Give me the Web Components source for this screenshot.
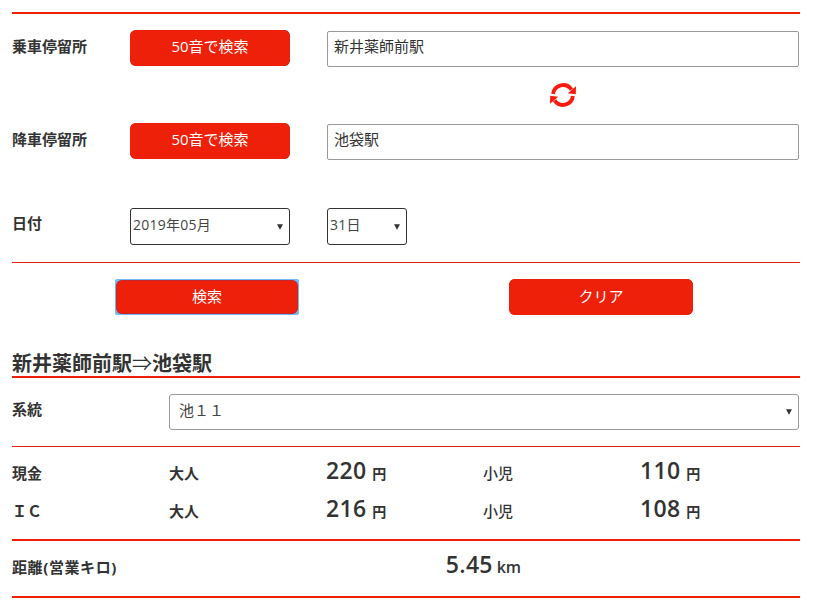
<!DOCTYPE html>
<html lang="ja">
<head>
<meta charset="utf-8">
<title>運賃検索</title>
<style>
  html, body { margin: 0; background: #fff; }
  body {
    font-family: "Open Sans", "Noto Sans CJK JP", sans-serif;
    color: #333;
    font-size: 15px;
  }
</style>
</head>
<body>
<fare-page>
  <red-rule size="2" top="12"></red-rule>

  <form-row label="乗車停留所" top="16">
    <red-button width="160">50音で検索</red-button>
    <text-box slot="field" value="新井薬師前駅"></text-box>
  </form-row>
  <swap-icon></swap-icon>
  <form-row label="降車停留所">
    <red-button width="160">50音で検索</red-button>
    <text-box slot="field" value="池袋駅"></text-box>
  </form-row>
  <form-row label="日付" top="48" tight>
    <select-box width="160" value="2019年05月"></select-box>
    <select-box slot="field" width="80" value="31日"></select-box>
  </form-row>

  <red-rule size="1" top="17"></red-rule>
  <action-bar>
    <red-button width="184" lift="3" focused>検索</red-button>
    <red-button width="184" lift="3">クリア</red-button>
  </action-bar>

  <route-title>新井薬師前駅<span style="font-weight:400">⇒</span>池袋駅</route-title>

  <system-row label="系統" value="池１１"></system-row>
  <red-rule size="1" top="16"></red-rule>

  <fare-row label="現金" adult="220" child="110"></fare-row>
  <fare-row label="ＩＣ" adult="216" child="108"></fare-row>
  <red-rule size="2" top="9"></red-rule>

  <distance-row label="距離(営業キロ)" value="5.45"></distance-row>
  <red-rule size="2" top="0"></red-rule>
</fare-page>

<script>
/**
 * Attach an open shadow root holding the given markup.
 *
 * @param {HTMLElement} el - The host element.
 * @param {string} html - Styles and markup.
 */
function render (el, html) {
  el.attachShadow({ mode: 'open' }).innerHTML = html
}

customElements.define('fare-page', class extends HTMLElement {
  constructor () {
    super()
    render(this, `
      <style>
        :host { display: block; width: 788px; padding: 0 15px 12px 12px; }
      </style>
      <slot></slot>`)
  }
})

customElements.define('red-rule', class extends HTMLElement {
  connectedCallback () {
    render(this, `
      <style>
        :host {
          display: block;
          height: ${this.getAttribute('size')}px;
          margin-top: ${this.getAttribute('top')}px;
          background: #ee2009;
        }
      </style>`)
  }
})

customElements.define('form-row', class extends HTMLElement {
  connectedCallback () {
    render(this, `
      <style>
        :host {
          display: grid;
          grid-template-columns: 118px 197px 1fr;
          align-items: start;
          margin-top: ${this.getAttribute('top') || 0}px;
        }
        .label {
          font-weight: 700;
          font-size: 15px;
          line-height: ${this.hasAttribute('tight') ? 30 : 32}px;
        }
      </style>
      <div class="label">${this.getAttribute('label')}</div>
      <div><slot></slot></div>
      <div><slot name="field"></slot></div>`)
  }
})

customElements.define('red-button', class extends HTMLElement {
  connectedCallback () {
    const focused = this.hasAttribute('focused')
    render(this, `
      <style>
        :host { display: block; width: ${this.getAttribute('width')}px; }
        button {
          display: block;
          box-sizing: border-box;
          width: 100%;
          height: 36px;
          padding: ${focused ? '1px' : '0'};
          border: 0;
          border-radius: ${focused ? '2px' : '6px'};
          background: ${focused ? '#74b8f9' : '#ee2009'};
          color: #fff;
          font: 15px "Open Sans", "Noto Sans CJK JP", sans-serif;
        }
        span {
          display: flex;
          align-items: center;
          justify-content: center;
          box-sizing: border-box;
          height: 100%;
          padding-bottom: ${this.getAttribute('lift') || 5}px;
          border-radius: 6px;
          background: #ee2009;
          ${focused ? 'box-shadow: inset 0 0 0 1px rgba(100, 60, 130, .3);' : ''}
        }
      </style>
      <button type="button"><span><slot></slot></span></button>`)
  }
})

customElements.define('text-box', class extends HTMLElement {
  connectedCallback () {
    render(this, `
      <style>
        :host {
          display: block;
          box-sizing: border-box;
          width: 472px;
          height: 36px;
          margin-top: 1px;
          padding: 0 6px;
          border: 1px solid #999;
          border-radius: 2px;
          font-size: 15px;
          line-height: 29px;
          color: #333;
        }
      </style>
      ${this.getAttribute('value')}`)
  }
})

customElements.define('select-box', class extends HTMLElement {
  connectedCallback () {
    const tall = this.getAttribute('height') || 37
    render(this, `
      <style>
        :host {
          display: flex;
          align-items: center;
          justify-content: space-between;
          box-sizing: border-box;
          width: ${this.getAttribute('width')}px;
          height: ${tall}px;
          padding: 0 6px 0 ${this.getAttribute('pad') || 2}px;
          border: 1px solid ${this.getAttribute('line') || '#333'};
          border-radius: 3px;
          font-size: ${this.getAttribute('text') || 14}px;
          letter-spacing: ${this.getAttribute('text') ? 0 : 0.25}px;
          color: #444;
        }
        span { position: relative; top: -3px; }
        svg { display: block; }
      </style>
      <span>${this.getAttribute('value')}</span>
      <svg width="6" height="6" viewBox="0 0 6 6"><path d="M0 .3h6L3 5.8z" fill="#333"/></svg>`)
  }
})

customElements.define('swap-icon', class extends HTMLElement {
  constructor () {
    super()
    render(this, `
      <style>
        :host { display: flex; height: 56px; padding: 16px 0 0 538px; box-sizing: border-box; }
        svg { display: block; }
      </style>
      <svg width="26" height="24" viewBox="0 0 26 24" fill="none" stroke="#fb1a10" stroke-width="3.8">
        <path d="M3.1 11A10 10 0 0 1 21.4 6.6"/>
        <path d="M22.9 13A10 10 0 0 1 4.6 17.4"/>
        <path d="M26 3.2 25.8 11.2 17.8 10.2z" fill="#fb1a10" stroke="none"/>
        <path d="M0 20.8 .2 12.8 8.2 13.8z" fill="#fb1a10" stroke="none"/>
      </svg>`)
  }
})

customElements.define('action-bar', class extends HTMLElement {
  constructor () {
    super()
    render(this, `
      <style>
        :host { display: flex; gap: 210px; margin-top: 16px; padding-left: 103px; }
      </style>
      <slot></slot>`)
  }
})

customElements.define('route-title', class extends HTMLElement {
  constructor () {
    super()
    render(this, `
      <style>
        :host {
          display: block;
          margin-top: 30px;
          padding-top: 6px;
          border-bottom: 2px solid #ee2009;
          font-size: 20px;
          font-weight: 700;
          line-height: 25px;
          color: #333;
        }
      </style>
      <slot></slot>`)
  }
})

customElements.define('system-row', class extends HTMLElement {
  connectedCallback () {
    render(this, `
      <style>
        :host {
          display: grid;
          grid-template-columns: 157px 1fr;
          margin-top: 16px;
          font-size: 15px;
        }
        .label { font-weight: 700; line-height: 30px; }
      </style>
      <div class="label">${this.getAttribute('label')}</div>
      <select-box width="630" height="36" line="#999" pad="9" text="15" value="${this.getAttribute('value')}"></select-box>`)
  }
})

customElements.define('fare-row', class extends HTMLElement {
  connectedCallback () {
    const money = value => `<div><b>${value}</b> <small>円</small></div>`
    render(this, `
      <style>
        :host {
          display: grid;
          grid-template-columns: repeat(5, 157px);
          align-items: baseline;
          height: 38px;
          font-size: 15px;
          font-weight: 700;
          color: #333;
        }
        :host(:first-of-type) { margin-top: 7px; }
        .thin { font-weight: 500; }
        b { font-size: 23px; font-weight: 600; letter-spacing: .3px; }
        small { margin-left: 2px; font-size: 14px; }
      </style>
      <div>${this.getAttribute('label')}</div>
      <div>大人</div>
      ${money(this.getAttribute('adult'))}
      <div class="thin">小児</div>
      ${money(this.getAttribute('child'))}`)
  }
})

customElements.define('distance-row', class extends HTMLElement {
  connectedCallback () {
    render(this, `
      <style>
        :host {
          display: grid;
          grid-template-columns: 157px 1fr;
          align-items: baseline;
          height: 55px;
          font-size: 15px;
          font-weight: 700;
          color: #333;
        }
        .label { letter-spacing: .6px; }
        .value { padding-right: 2px; text-align: center; line-height: 46px; }
        b { font-size: 23px; font-weight: 600; letter-spacing: .3px; }
        small { font-size: 16px; font-weight: 600; }
      </style>
      <div class="label">${this.getAttribute('label')}</div>
      <div class="value"><b>${this.getAttribute('value')}</b> <small>km</small></div>`)
  }
})
</script>
</body>
</html>
